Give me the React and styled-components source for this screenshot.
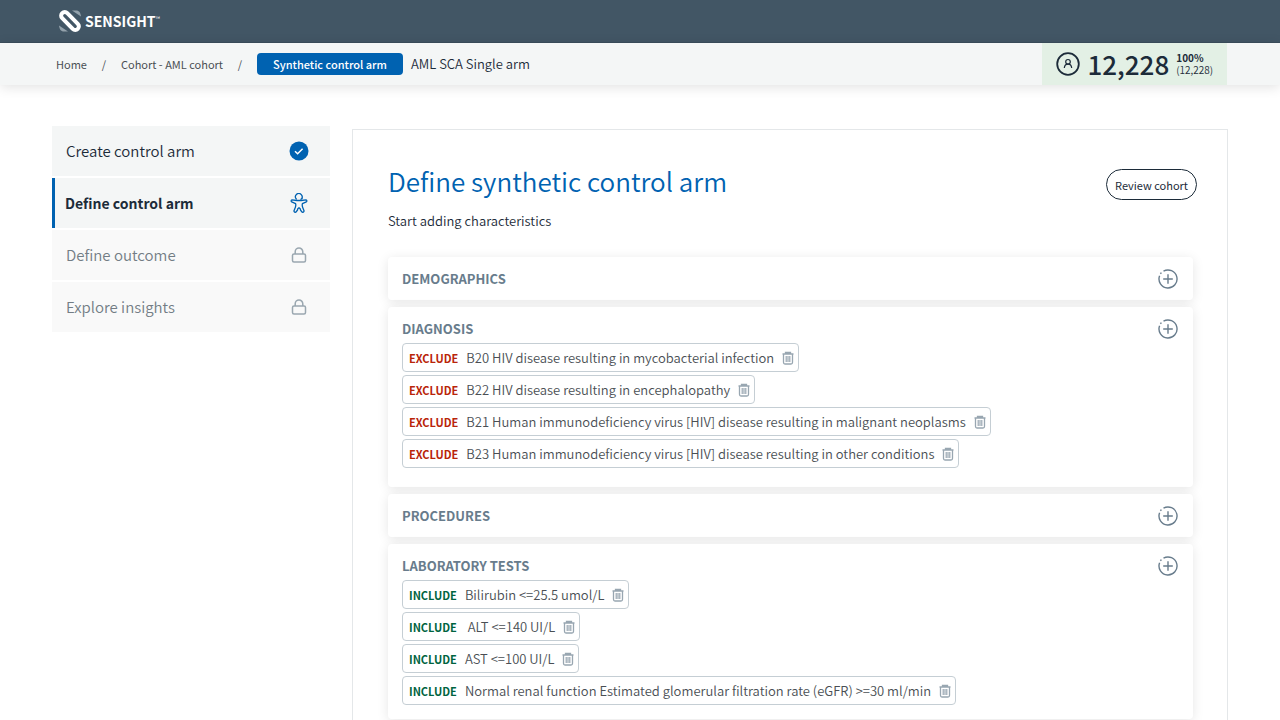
import React from 'react';
import styled, {createGlobalStyle, css, ThemeProvider} from 'styled-components';

const theme = {
  font: '"Noto Sans CJK SC", "Noto Sans", sans-serif',
  header: '#425665',
  bar: '#f4f6f6',
  muted: '#f9f9f9',
  mint: '#e3f0e5',
  primary: '#0062b1',
  dark: '#1c2b39',
  text: '#4a4f54',
  slate: '#687c8c',
  locked: '#737d85',
  border: '#c5ced4',
  line: '#e4e7e9',
  exclude: '#b92509',
  include: '#00643f',
};

const GlobalStyle = createGlobalStyle`
  * {
    box-sizing: border-box;
  }

  body {
    margin: 0;
    background: #fff;
    font-family: ${theme.font};
    font-weight: 350;
  }

  button {
    font-family: inherit;
    cursor: pointer;
  }
`;

const StyledHeader = styled.header`
  display: flex;
  align-items: center;
  gap: 3px;
  height: 43px;
  padding: 0 58px;
  background: ${(props) => props.theme.header};
  border-bottom: 1px solid #3b4e5c;
`;

const StyledBrand = styled.span`
  color: #fff;
  font-size: 14px;
  font-weight: 700;
  line-height: 20px;

  sup {
    font-size: 6px;
    line-height: 6px;
    font-weight: 400;
    vertical-align: 6px;
  }
`;

const StyledSubheader = styled.div`
  display: flex;
  align-items: center;
  justify-content: space-between;
  height: 42px;
  padding: 0 53px 0 56px;
  background: ${(props) => props.theme.bar};
  box-shadow: 0 2px 12px rgba(0, 0, 0, 0.12);
`;

const StyledBreadcrumbs = styled.nav`
  display: flex;
  align-items: center;
  color: ${(props) => props.theme.text};
  font-size: 11px;
  font-weight: 400;
  line-height: 20px;
`;

const StyledCrumb = styled.a`
  color: inherit;
  text-decoration: none;
`;

const StyledSlash = styled.span`
  width: 34px;
  text-align: center;
`;

const StyledCrumbTag = styled.span`
  margin-right: 8px;
  padding: 0 16px;
  border-radius: 4px;
  background: ${(props) => props.theme.primary};
  color: #fff;
  font-weight: 500;
  line-height: 22px;
`;

const StyledCrumbCurrent = styled.span`
  color: ${(props) => props.theme.dark};
  font-size: 13px;
  font-weight: 350;
`;

const StyledCount = styled.div`
  display: flex;
  align-items: center;
  gap: 7px;
  height: 100%;
  padding: 0 14px;
  background: ${(props) => props.theme.mint};
  color: ${(props) => props.theme.dark};
`;

const StyledCountTotal = styled.span`
  font-size: 26px;
  font-weight: 500;
  line-height: 40px;
`;

const StyledCountShare = styled.span`
  display: flex;
  flex-direction: column;
  font-size: 10px;
  line-height: 12px;
`;

const StyledPage = styled.div`
  display: flex;
  align-items: flex-start;
  gap: 22px;
  padding: 41px 52px 0;
`;

const StyledSteps = styled.nav`
  display: flex;
  flex-direction: column;
  gap: 2px;
  flex: 0 0 278px;
`;

const StyledStep = styled.a`
  display: flex;
  align-items: center;
  justify-content: space-between;
  height: 50px;
  padding: 0 21px 0 14px;
  background: ${(props) => props.theme.bar};
  color: ${(props) => props.theme.dark};
  font-size: 15px;
  line-height: 22px;
  text-decoration: none;

  ${(props) => props.$active && css`
    padding-left: 10px;
    border-left: 3px solid ${props.theme.primary};
    font-size: 14px;
    font-weight: 700;
  `}

  ${(props) => props.$locked && css`
    background: ${props.theme.muted};
    color: ${props.theme.locked};
  `}
`;

const StyledPanel = styled.main`
  flex: 1;
  min-width: 0;
  margin-top: 3px;
  padding: 35px 34px 40px 35px;
  border: 1px solid ${(props) => props.theme.line};
`;

const StyledPanelHeader = styled.div`
  display: flex;
  justify-content: space-between;
  align-items: flex-start;
  margin-right: -4px;
`;

const StyledTitle = styled.h1`
  margin: 0;
  color: ${(props) => props.theme.primary};
  font-size: 26px;
  font-weight: 350;
  line-height: 32px;
`;

const StyledReviewButton = styled.button`
  height: 31px;
  margin-top: 4px;
  padding: 0 8px;
  border: 1px solid ${(props) => props.theme.dark};
  border-radius: 16px;
  background: #fff;
  color: ${(props) => props.theme.dark};
  font-size: 11px;
`;

const StyledIntro = styled.p`
  margin: 11px 0 26px;
  color: ${(props) => props.theme.dark};
  font-size: 13px;
  line-height: 20px;
`;

const StyledSections = styled.div`
  display: flex;
  flex-direction: column;
  gap: 7px;
`;

const StyledSection = styled.section`
  padding: 12px 15px 11px 14px;
  border-radius: 4px;
  background: #fff;
  box-shadow: 0 2px 12px rgba(0, 0, 0, 0.1);

  ${(props) => props.$filled && css`
    padding-bottom: 19px;
  `}

  &:last-child {
    padding-bottom: 14px;
  }
`;

const StyledSectionHeader = styled.div`
  display: flex;
  align-items: center;
  justify-content: space-between;
`;

const StyledSectionTitle = styled.h2`
  margin: 0;
  color: ${(props) => props.theme.slate};
  font-size: 13px;
  font-weight: 700;
  line-height: 20px;
`;

const StyledIconButton = styled.button`
  display: flex;
  padding: 0;
  border: 0;
  background: none;
  color: ${(props) => props.theme.slate};
`;

const StyledChips = styled.ul`
  display: flex;
  flex-direction: column;
  align-items: flex-start;
  gap: 3px;
  margin: 4px 0 0;
  padding: 0;
  list-style: none;
`;

const StyledChip = styled.li`
  display: flex;
  align-items: center;
  height: 29px;
  padding: 0 4px 0 6px;
  border: 1px solid ${(props) => props.theme.border};
  border-radius: 4px;
  color: ${(props) => props.theme.text};
  font-size: 13px;
  line-height: 20px;
`;

const StyledRule = styled.span`
  margin-right: 8px;
  color: ${(props) => props.$exclude ? props.theme.exclude : props.theme.include};
  font-size: 11px;
  font-weight: 700;
`;

const StyledChipLabel = styled.span`
  margin-right: 8px;
  white-space: pre-wrap;
`;

const Logo = () => (
  <svg width="24" height="24" viewBox="0 0 24 24" aria-hidden="true">
    <path d="M14 1.500h4c2.600 0 4.500 1.500 5 6z" fill="#94a2ac" />
    <path d="M10 22.500H6c-2.600 0-4.500-1.500-5-6z" fill="#94a2ac" />
    <path
      d="M4.200 9.200a3.600 3.600 0 0 1 5.100-5.100l10.500 10.700a3.600 3.600 0 0 1-5.100 5.100z"
      fill={theme.header}
      stroke="#fff"
      strokeWidth="4"
      strokeLinejoin="round"
    />
  </svg>
);

const PersonIcon = () => (
  <svg width="24" height="24" viewBox="0 0 24 24" fill="none" stroke="currentColor" aria-hidden="true">
    <circle cx="12" cy="12" r="10.800" strokeWidth="1.800" />
    <circle cx="12" cy="9.800" r="2.300" strokeWidth="1.200" />
    <path d="M8.300 16c.2-2.400 1.300-3.900 3.700-3.900s3.500 1.500 3.700 3.900" strokeWidth="1.200" />
  </svg>
);

const CheckIcon = () => (
  <svg width="20" height="20" viewBox="0 0 20 20" fill="none" aria-hidden="true">
    <circle cx="10" cy="10" r="9.500" fill={theme.primary} />
    <path d="M6 10.300l2.600 2.500 5-5" stroke="#fff" strokeWidth="1.500" />
  </svg>
);

const BodyIcon = () => (
  <svg
    width="20"
    height="20"
    viewBox="0 0 20 20"
    fill="none"
    stroke={theme.primary}
    strokeWidth="1.300"
    strokeLinecap="round"
    strokeLinejoin="round"
    aria-hidden="true"
  >
    <path d="M7.300 6A3.300 3.300 0 1 1 12 6.300M13.100 5.500l.2-.7" />
    <path d="M7.800 7.500L3 6.900a1 1 0 0 0-.3 1.900l3.900 1.800c.4 1.500.2 2.700-.3 3.900L5 17.700c-.3 1.400 1.500 2 2.200 1.100L8.500 17l.3-1.300 1.200-1 1.200 1 .3 1.300 1.300 1.800c.7.900 2.500.3 2.200-1.100l-1.300-3.200c-.5-1.200-.7-2.400-.3-3.900l3.900-1.800a1 1 0 0 0-.3-1.900l-4.800.6z" />
  </svg>
);

const LockIcon = () => (
  <svg width="20" height="20" viewBox="0 0 20 20" fill="none" stroke="#9aa7b0" strokeWidth="1.500" aria-hidden="true">
    <rect x="3.500" y="9" width="13" height="8" rx="1.500" />
    <path d="M6.200 9V6.800a3.800 3.800 0 0 1 7.600 0V9" />
  </svg>
);

const PlusIcon = () => (
  <svg width="20" height="20" viewBox="0 0 20 20" fill="none" stroke="currentColor" strokeWidth="1.400" aria-hidden="true">
    <path d="M5.500 2.200A9 9 0 1 1 1.600 6.800M2.400 4.800l1-1.200" />
    <path d="M10 5.200v9.600M5.200 10h9.600" />
  </svg>
);

const TrashIcon = () => (
  <svg width="12" height="14" viewBox="0 0 12 14" fill="none" stroke="#98a6b1" aria-hidden="true">
    <path d="M.5 3h11M3.500 3V1.500h5V3M1.500 3v8.500a1.500 1.500 0 0 0 1.500 1.500h6a1.500 1.500 0 0 0 1.500-1.500V3" strokeWidth="1.300" />
    <path d="M4.200 5v6M6 5v6M7.800 5v6" strokeWidth="1.200" />
  </svg>
);

const steps = [
  {label: 'Create control arm', Icon: CheckIcon},
  {label: 'Define control arm', Icon: BodyIcon, active: true},
  {label: 'Define outcome', Icon: LockIcon, locked: true},
  {label: 'Explore insights', Icon: LockIcon, locked: true},
];

const sections = [
  {title: 'DEMOGRAPHICS', items: []},
  {
    title: 'DIAGNOSIS',
    rule: 'EXCLUDE',
    items: [
      'B20 HIV disease resulting in mycobacterial infection',
      'B22 HIV disease resulting in encephalopathy',
      'B21 Human immunodeficiency virus [HIV] disease resulting in malignant neoplasms',
      'B23 Human immunodeficiency virus [HIV] disease resulting in other conditions',
    ],
  },
  {title: 'PROCEDURES', items: []},
  {
    title: 'LABORATORY TESTS',
    rule: 'INCLUDE',
    items: [
      'Bilirubin <=25.5 umol/L',
      ' ALT <=140 UI/L',
      'AST <=100 UI/L',
      'Normal renal function Estimated glomerular filtration rate (eGFR) >=30 ml/min',
    ],
  },
];

const Section = ({title, rule, items}) => (
  <StyledSection $filled={items.length > 0}>
    <StyledSectionHeader>
      <StyledSectionTitle>{title}</StyledSectionTitle>
      <StyledIconButton aria-label={`Add to ${title}`}>
        <PlusIcon />
      </StyledIconButton>
    </StyledSectionHeader>
    {items.length > 0 && (
      <StyledChips>
        {items.map((item) => (
          <StyledChip key={item}>
            <StyledRule $exclude={rule === 'EXCLUDE'}>{rule}</StyledRule>
            <StyledChipLabel>{item}</StyledChipLabel>
            <StyledIconButton aria-label={`Remove ${item}`}>
              <TrashIcon />
            </StyledIconButton>
          </StyledChip>
        ))}
      </StyledChips>
    )}
  </StyledSection>
);

const App = () => (
  <ThemeProvider theme={theme}>
    <GlobalStyle />
    <StyledHeader>
      <Logo />
      <StyledBrand>SENSIGHT<sup>™</sup></StyledBrand>
    </StyledHeader>
    <StyledSubheader>
      <StyledBreadcrumbs>
        <StyledCrumb href="#home">Home</StyledCrumb>
        <StyledSlash>/</StyledSlash>
        <StyledCrumb href="#cohort">Cohort - AML cohort</StyledCrumb>
        <StyledSlash>/</StyledSlash>
        <StyledCrumbTag>Synthetic control arm</StyledCrumbTag>
        <StyledCrumbCurrent>AML SCA Single arm</StyledCrumbCurrent>
      </StyledBreadcrumbs>
      <StyledCount>
        <PersonIcon />
        <StyledCountTotal>12,228</StyledCountTotal>
        <StyledCountShare>
          <b>100%</b>
          <span>(12,228)</span>
        </StyledCountShare>
      </StyledCount>
    </StyledSubheader>
    <StyledPage>
      <StyledSteps>
        {steps.map(({label, Icon, active, locked}) => (
          <StyledStep key={label} href="#step" $active={active} $locked={locked}>
            {label}
            <Icon />
          </StyledStep>
        ))}
      </StyledSteps>
      <StyledPanel>
        <StyledPanelHeader>
          <StyledTitle>Define synthetic control arm</StyledTitle>
          <StyledReviewButton>Review cohort</StyledReviewButton>
        </StyledPanelHeader>
        <StyledIntro>Start adding characteristics</StyledIntro>
        <StyledSections>
          {sections.map((section) => (
            <Section key={section.title} {...section} />
          ))}
        </StyledSections>
      </StyledPanel>
    </StyledPage>
  </ThemeProvider>
);

export default App;
